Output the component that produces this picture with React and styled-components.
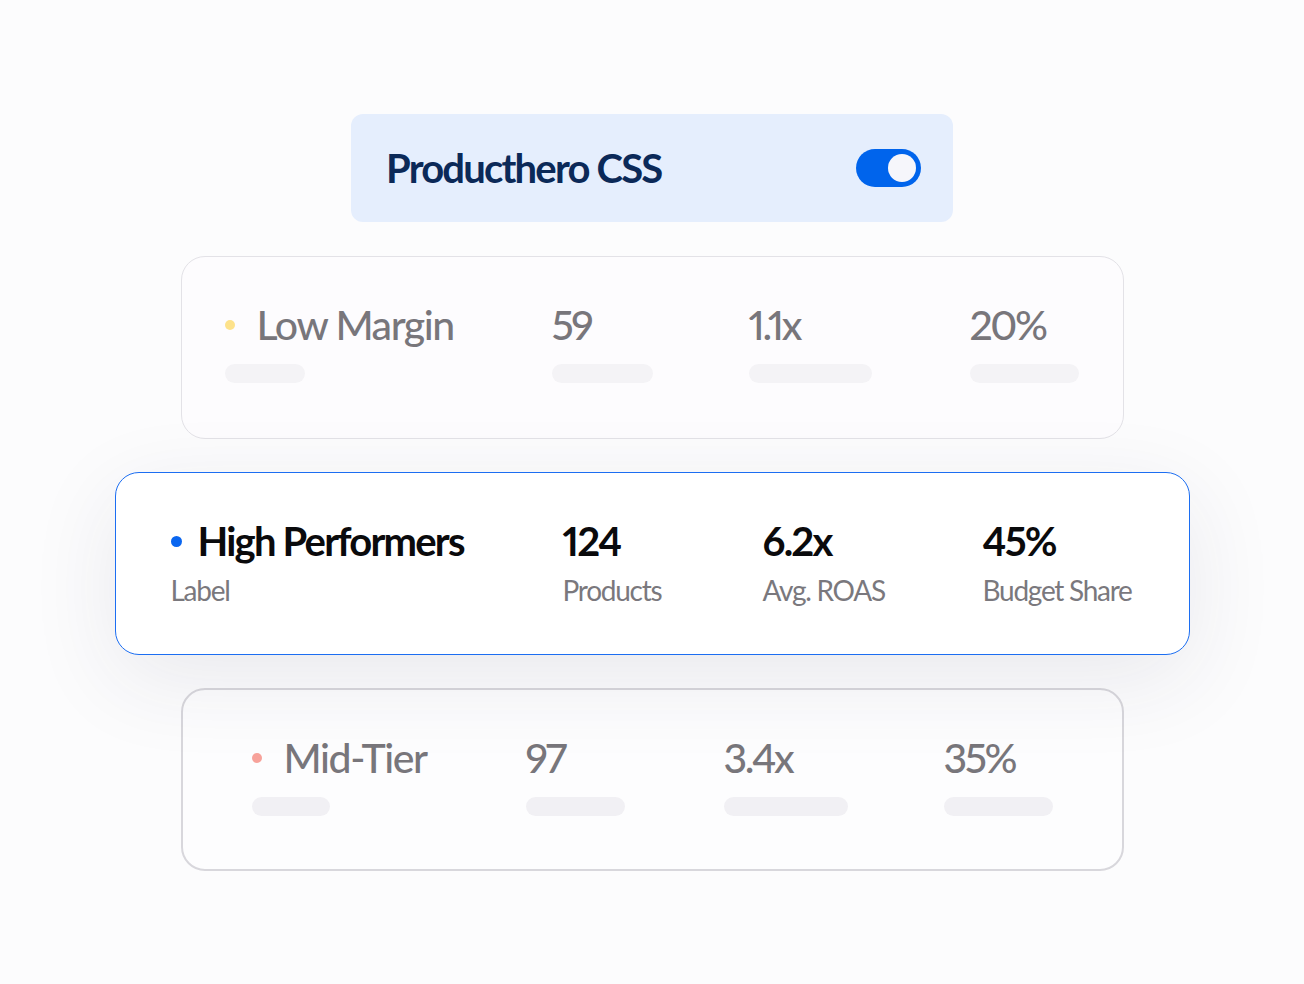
import React from "react"
import styled, { createGlobalStyle } from "styled-components"

const GlobalStyle = createGlobalStyle`
  html, body {
    margin: 0;
    background: #fcfcfd;
  }
  body {
    font-family: Lato, "Noto Sans", sans-serif;
    font-variant-numeric: proportional-nums;
  }
`

const Page = styled.div`
  width: 1304px;
  height: 984px;
  box-sizing: border-box;
  padding-top: 114px;
  display: flex;
  flex-direction: column;
  align-items: center;
  gap: 33px;
`

const Header = styled.div`
  width: 602px;
  height: 108px;
  margin-bottom: 1px;
  box-sizing: border-box;
  padding: 0 32px 0 35px;
  border-radius: 12px;
  background: #e5eefd;
  display: flex;
  align-items: center;
  justify-content: space-between;
`

const Brand = styled.h1`
  margin: 0;
  font-size: 40px;
  font-weight: 700;
  letter-spacing: -0.045em;
  color: #0b2958;
`

const Toggle = styled.div`
  width: 65px;
  height: 38px;
  box-sizing: border-box;
  padding: 0 5px;
  border-radius: 19px;
  background: #0064ec;
  display: flex;
  align-items: center;
  justify-content: flex-end;
`

const Knob = styled.span`
  width: 28px;
  height: 28px;
  border-radius: 50%;
  background: #f6f6fb;
`

const Card = styled.div`
  width: ${p => p.$width}px;
  height: 183px;
  box-sizing: border-box;
  padding: 44px 0 0 ${p => p.$pad}px;
  border-radius: 24px;
  border: ${p => p.$border};
  background: ${p => p.$bg};
  display: grid;
  grid-template-columns: ${p => p.$cols};
  align-items: start;
  ${p => p.$lifted && `
    position: relative;
    z-index: 1;
    box-shadow: 0 24px 90px rgba(40, 40, 80, 0.09);
  `}
`

const Cell = styled.div`
  display: flex;
  flex-direction: column;
  align-items: flex-start;
`

const TitleRow = styled.div`
  display: flex;
  align-items: center;
  gap: ${p => p.$gap}px;
`

const Dot = styled.span`
  width: ${p => p.$size}px;
  height: ${p => p.$size}px;
  border-radius: 50%;
  background: ${p => p.$color};
  flex: none;
`

const Value = styled.div`
  font-size: ${p => (p.$strong ? 40 : 41)}px;
  line-height: 48px;
  font-weight: ${p => (p.$strong ? 700 : 500)};
  letter-spacing: ${p => (p.$strong ? "-0.045em" : p.$num ? "-0.06em" : "-0.035em")};
  color: ${p => (p.$strong ? "#0a0a0c" : "#78767b")};
  white-space: nowrap;
`

const Caption = styled.div`
  margin-top: 9px;
  font-size: 28px;
  line-height: 32px;
  font-weight: 400;
  letter-spacing: -0.045em;
  color: #7a787d;
  white-space: nowrap;
`

const Bar = styled.div`
  margin-top: 15px;
  width: ${p => p.$w}px;
  height: 19px;
  border-radius: 10px;
  background: ${p => p.$color};
  filter: blur(0.6px);
`

const rows = [
  {
    key: "low",
    width: 943,
    pad: 43,
    cols: "327px 197px 221px 1fr",
    border: "1px solid #e3e2e7",
    bg: "#fdfcfe",
    dot: { color: "#fde28b", size: 10, gap: 22 },
    title: "Low Margin",
    values: ["59", "1.1x", "20%"],
    bars: [80, 101, 123, 109],
    barColor: "#f4f3f6",
  },
  {
    key: "high",
    width: 1075,
    pad: 55,
    cols: "392px 200px 220px 1fr",
    border: "1.5px solid #1c6ef2",
    bg: "#ffffff",
    lifted: true,
    strong: true,
    dot: { color: "#0a66f0", size: 11, gap: 16 },
    title: "High Performers",
    values: ["124", "6.2x", "45%"],
    captions: ["Label", "Products", "Avg. ROAS", "Budget Share"],
  },
  {
    key: "mid",
    width: 943,
    pad: 69,
    cols: "274px 198px 220px 1fr",
    border: "2px solid #d8d7dc",
    bg: "#fdfdfe",
    dot: { color: "#f7a29a", size: 10, gap: 22 },
    title: "Mid-Tier",
    values: ["97", "3.4x", "35%"],
    bars: [78, 99, 124, 109],
    barColor: "#f1f0f4",
  },
]

const Below = ({ row, i }) =>
  row.captions ? (
    <Caption>{row.captions[i]}</Caption>
  ) : (
    <Bar $w={row.bars[i]} $color={row.barColor} />
  )

const SegmentCard = ({ row }) => (
  <Card
    $width={row.width}
    $pad={row.pad}
    $cols={row.cols}
    $border={row.border}
    $bg={row.bg}
    $lifted={row.lifted}
  >
    <Cell>
      <TitleRow $gap={row.dot.gap}>
        <Dot $color={row.dot.color} $size={row.dot.size} />
        <Value $strong={row.strong}>{row.title}</Value>
      </TitleRow>
      <Below row={row} i={0} />
    </Cell>
    {row.values.map((v, i) => (
      <Cell key={v}>
        <Value $strong={row.strong} $num>{v}</Value>
        <Below row={row} i={i + 1} />
      </Cell>
    ))}
  </Card>
)

const App = () => (
  <>
    <GlobalStyle />
    <Page>
      <Header>
        <Brand>Producthero CSS</Brand>
        <Toggle>
          <Knob />
        </Toggle>
      </Header>
      {rows.map(row => (
        <SegmentCard key={row.key} row={row} />
      ))}
    </Page>
  </>
)

export default App
